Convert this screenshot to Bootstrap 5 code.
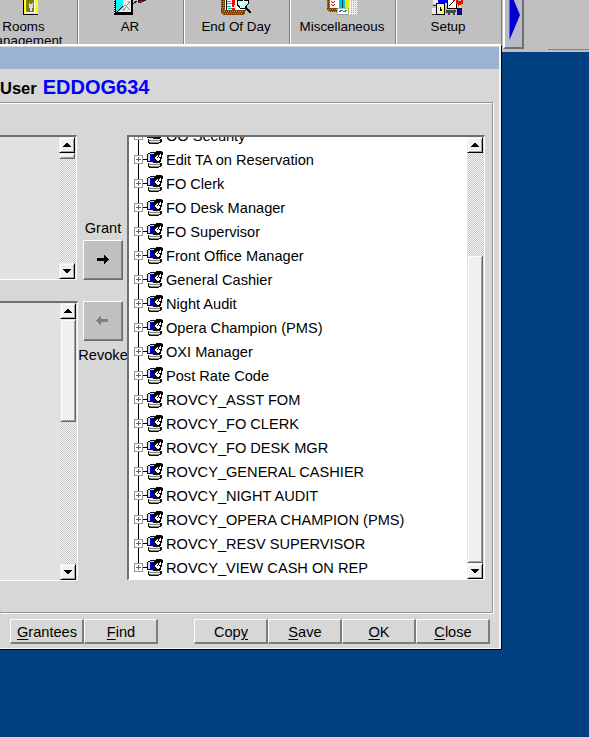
<!DOCTYPE html>
<html lang="en">
<head>
<meta charset="utf-8">
<meta name="viewport" content="width=device-width, initial-scale=1">
<title>User grants</title>
<link href="https://cdn.jsdelivr.net/npm/bootstrap@5.3.0/dist/css/bootstrap.min.css" rel="stylesheet">
<style>
body{background:#004080;font-family:"Liberation Sans",Arial,sans-serif;font-size:14.6px;line-height:18px;color:#000;height:737px;overflow:hidden}
svg{display:block;shape-rendering:crispEdges;flex:none}
.toolbar{height:52px;background:#c0c0c0;overflow:hidden}
.tool{width:106px;flex:none;border-left:1px solid #fff;border-right:1px solid #808080;font-size:13.4px;line-height:16px;height:52px;padding-right:2px}
.tool:first-child{margin-left:-28px;padding-right:3px}
.tool svg{height:15px;width:34px;margin-bottom:5px}
.tool:first-child svg{margin-left:8px}
.tool span{display:block;line-height:14px}
.next{width:21px;height:49px;background:#b9bcc8;border:solid;border-color:#b9bcc8 #707070 #707070 #fff;border-width:0 2px 2px 2px;margin-left:1px}
.next svg{shape-rendering:auto}
.rule{width:41px;height:1px;background:#808080;margin-top:49px}
.dialog{width:502px;height:606px;margin-top:-8px;background:#d7d7d7;border-top:2px solid #fff;border-right:1px solid #000;border-bottom:1px solid #000;box-shadow:inset -2px -1px 0 #f4f4f4}
.titlebar{height:22px;background:#99b3d1;margin:1px 2px 0 0}
.heading{height:33px;line-height:37px;font-weight:bold;font-size:16.5px}
.heading b{color:#00f;font-size:20px;margin-left:6px}
.panel{height:511px;width:493px;border:solid #949494;border-width:1px 1px 1px 0;box-shadow:1px 1px 0 #fff,inset 0 1px 0 #fff;padding-top:32px}
.sunken{border:solid;border-color:#707070 #fff #fff #707070;border-width:2px 1px 1px 0}
.list-a{width:77px;height:145px;background:#e1e1e1}
.list-b{width:78px;height:280px;background:#e1e1e1;margin-top:21px}
.tree{width:358px;height:445px;background:#fff;border-left-width:2px}
.sbar{width:17px;flex:none;background:repeating-conic-gradient(#c6c6c6 0 25%,#f8f8f8 0 50%) 0 0/2px 2px}
.sbtn,.thumb{background:#f0f0f0;border:1px solid;border-color:#f0f0f0 #000 #000 #f0f0f0;box-shadow:inset 1px 1px 0 #fff,inset -1px -1px 0 #a0a0a0;flex:none;width:16px}
.sbtn{height:16px}
.thumb{border-color:#e3e3e3 #696969 #696969 #e3e3e3}
.t1{height:6px}.t2{height:103px}.t3{height:308px;margin-top:102px}
.mid{width:49px;padding:84px 0 0 1px;flex:none}
.abtn{width:40px;height:40px;background:#c0c0c0;border:1px solid;border-color:#fff #6c6c6c #6c6c6c #fff;box-shadow:inset -1px -1px 0 #808080;padding:1px}
.abtn:first-of-type{margin:3px 0 21px}
.revoke{margin-top:5px;white-space:nowrap}
.leaf{height:24px;padding-left:1px;flex:none;white-space:nowrap}
.leaf svg{width:34px;height:24px;margin-right:2px}
.items{margin-top:-13px}
.view{overflow:hidden;height:442px}
.actions{padding:6px 0 0 10px}
.cmd{width:74px;height:25px;background:#d7d7d7;border:solid;border-width:1px 2px 2px 1px;border-color:#fff #7c7c7c #7c7c7c #fff;line-height:25px;text-align:center;padding:0 0 0 1px;color:#000;flex:none}
u{text-underline-offset:2px;text-decoration-thickness:1px}
.gap-cmd{margin-left:36px}
</style>
</head>
<body>
<svg width="0" height="0" class="position-absolute">
<defs>
<path id="up" d="M7 6h2v1h1v1h1v1h1v1H4V9h1V8h1V7h1z"/>
<g id="node">
<path d="M8 0h1v7h-1zM13 11h4v1h-4z"/>
<path d="M4.500 7.500h8v8h-8z" fill="#fff" stroke="#969696"/><path d="M6 11.500h5M8.500 9v5" stroke="#606060"/>
<path d="M20 4h8v1h-8zM18 5h2v1h-2zM17 6h1v8h-1zM18 13h12v2h2v3h-1v1h-2v1H19v-1h-1v-4h1v-1h-1z" fill="#111"/>
<path d="M20 5h6v2h-6zM18 6h2v7h-2z" fill="#dcdcdc"/>
<path d="M20 6h6v7h-6z" fill="#0000b8"/>
<path d="M25 4h1V3h6v1h1v3h-1v4h-1v3h-4v-1h-2v-2h-1V9h-1V6h1V5h1z"/>
<path d="M25 9h1V8h1V7h1v2h1V7h1V6h1v3h-1v3h-1v1h-2v-1h-1v-1h-1z" fill="#fff"/>
<path d="M27 9h1v1h-1zM29 9h1v1h-1z"/>
<path d="M23 12h3v1h2v1h-5z" fill="#0000b8"/>
<path d="M19 14h4v1h7v1H19zM19 17h11v1H19z" fill="#e8e8e8"/><path d="M19 16h11v1H19zM20 18h9v1h-9z" fill="#8c8c8c"/>
</g>
<g id="branch"><use href="#node"/><path d="M8 16h1v8h-1z"/></g>
</defs></svg>
<header class="toolbar d-flex">
 <div class="tool d-flex flex-column align-items-center text-center">
  <svg viewBox="-1 0 34 15"><path d="M12 0h14v14H12z" fill="#ff0"/><path d="M11 0h1v14h14v1H11z"/><path d="M13 0h10v13H13z" fill="#fff"/><path d="M14 0h8v12h-8z" fill="#808000"/><path d="M17 3h1v1h2V3h1v5h-1v3h-1V8v3h-1V8h-1z" fill="#ddd"/></svg>
  <span>Rooms</span><span>Management</span></div>
 <div class="tool d-flex flex-column align-items-center">
  <svg viewBox="0 0 34 15"><path d="M1 0h19v15H1z"/><path d="M3 0h7v6l-7 6z" fill="#0ff"/><path d="M10 0h8v12H4l6-6z" fill="#e8e8e8"/><path d="M6 11l6-6 5 5M10 11l7-10" stroke="#999" fill="none"/><path d="M1.500 0v13" stroke="#fff" stroke-dasharray="1 1"/><path d="M20 4l4-3" stroke="#000"/><path d="M25 0h8l-2 1h-2v1l-3 1-1-1z" fill="red" stroke="#000" stroke-width=".6"/></svg>
  <span>AR</span></div>
 <div class="tool d-flex flex-column align-items-center">
  <svg viewBox="0 0 34 15"><path d="M2 0h25v10l-2 5H4l-2-2z" fill="#804000"/><path d="M2 1h4M2 3h4M2 5h4M2 7h4M3 9h4M3 11h22M4 13h20" stroke="#c89000" stroke-dasharray="1 1"/><path d="M6 0h20v10H6z" fill="#fff"/><path d="M7 0h1v10H7z"/><path d="M8 1h4v1H8zM8 3h5v1H8zM8 6h4v1H8zM9 8h4v1H9z" fill="#00b8c8"/><path d="M13 0h3v5h-1v2h-2zM13 8h3v2h-3z" fill="red"/><path d="M18 0h11v4l-3 4h-5l-3-4z" fill="#bff" stroke="#000"/><path d="M21 5l4-4" stroke="#fff" stroke-width="2"/><path d="M27 8l5 5" stroke="#000" stroke-width="2"/></svg>
  <span>End Of Day</span></div>
 <div class="tool d-flex flex-column align-items-center">
  <svg viewBox="0 0 34 15"><path d="M2 0h20v12H4l-2-2z" fill="#804000"/><path d="M2 1h4M2 3h4M2 5h4M2 7h4M3 9h10M4 11h9" stroke="#c89000" stroke-dasharray="1 1"/><path d="M5 0h9v8H5z" fill="#fff"/><path d="M6 1l2 2 2-2M6 4l2 2 2-2" stroke="red" fill="none"/><path d="M14 0h6v9h-6z" fill="#00c8d8"/><path d="M17 0v9" stroke="#046"/><path d="M20 0h4v13h-4z" fill="#e8e800"/><path d="M24 0h8v15h-8z" fill="#eee"/><path d="M26 0v15M28 0v15M30 0v15" stroke="#aaa" stroke-dasharray="1 1"/><path d="M12 8h11v6H12z" fill="#fff" stroke="#777" stroke-width=".5"/><path d="M14 12l3-2 2 2 3-2" stroke="#088" fill="none"/></svg>
  <span>Miscellaneous</span></div>
 <div class="tool d-flex flex-column align-items-center">
  <svg viewBox="0 0 34 15"><path d="M2 0h14v4H2zM1 8h5v6H1z" fill="#eee"/><path d="M7 0h9v3H7z" fill="#00f"/><path d="M2 5h4v1H2zM1 14h6v1H1z" fill="#333"/><path d="M5.500 3.500h8v11h-8z" fill="#eee" stroke="#000"/><path d="M8 6h4v7H8z" fill="#ffff60"/><path d="M9 7h1v2h1v2h-2z"/><path d="M16.500-1h9v9h-9z" fill="#fff" stroke="#000"/><path d="M18 6l5-5" stroke="#000"/><path d="M22 1l2-1" stroke="#c00"/><path d="M15 10h10v2h-1v3h-2v-2h-3v2h-2v-2h-2z" fill="#444"/><path d="M25 0h2v1h3V0h2v4h-2v2h-3V4h-2z" fill="red"/><path d="M26 8h5v7h-5z" fill="#000080"/><path d="M28 5h2v3h-2z" fill="#ff0"/></svg>
  <span>Setup</span></div>
 <div class="next"><svg width="17" height="47"><path d="M4.500-10v50L15 15z" fill="#0000d0"/></svg></div>
 <div class="rule ms-auto"></div>
</header>
<main class="dialog position-relative">
 <div class="titlebar"></div>
 <div class="heading">User<b>EDDOG634</b></div>
 <section class="panel d-flex">
  <div class="flex-shrink-0">
   <div class="sunken list-a d-flex justify-content-end"><div class="sbar d-flex flex-column"><div class="sbtn"><svg width="14" height="14" viewBox="1 1 14 14"><use href="#up"/></svg></div><div class="thumb t1"></div><div class="sbtn mt-auto"><svg width="14" height="14" viewBox="1 1 14 14"><use href="#up" transform="matrix(1 0 0 -1 0 16)"/></svg></div></div></div>
   <div class="sunken list-b d-flex justify-content-end"><div class="sbar d-flex flex-column"><div class="sbtn"><svg width="14" height="14" viewBox="1 1 14 14"><use href="#up"/></svg></div><div class="thumb t2"></div><div class="sbtn mt-auto"><svg width="14" height="14" viewBox="1 1 14 14"><use href="#up" transform="matrix(1 0 0 -1 0 16)"/></svg></div></div></div>
  </div>
  <div class="mid d-flex flex-column align-items-center">
   <span>Grant</span>
   <button class="abtn"><svg width="36" height="36"><path d="M12 16h7v-3h1v1h1v1h1v1h1v1h1v1h-1v1h-1v1h-1v1h-1v1h-1v-3h-7z"/></svg></button>
   <button class="abtn"><svg width="36" height="36"><path d="M23 16h-7v-3h-1v1h-1v1h-1v1h-1v1h-1v1h1v1h1v1h1v1h1v1h1v-3h7z" fill="#808080"/></svg></button>
   <span class="revoke">Revoke</span>
  </div>
  <div class="sunken tree d-flex position-relative">
   <div class="view flex-grow-1"><div class="items">
    <div class="leaf d-flex align-items-center"><svg><use href="#branch"/></svg>OO Security</div>
    <div class="leaf d-flex align-items-center"><svg><use href="#branch"/></svg>Edit TA on Reservation</div>
    <div class="leaf d-flex align-items-center"><svg><use href="#branch"/></svg>FO Clerk</div>
    <div class="leaf d-flex align-items-center"><svg><use href="#branch"/></svg>FO Desk Manager</div>
    <div class="leaf d-flex align-items-center"><svg><use href="#branch"/></svg>FO Supervisor</div>
    <div class="leaf d-flex align-items-center"><svg><use href="#branch"/></svg>Front Office Manager</div>
    <div class="leaf d-flex align-items-center"><svg><use href="#branch"/></svg>General Cashier</div>
    <div class="leaf d-flex align-items-center"><svg><use href="#branch"/></svg>Night Audit</div>
    <div class="leaf d-flex align-items-center"><svg><use href="#branch"/></svg>Opera Champion (PMS)</div>
    <div class="leaf d-flex align-items-center"><svg><use href="#branch"/></svg>OXI Manager</div>
    <div class="leaf d-flex align-items-center"><svg><use href="#branch"/></svg>Post Rate Code</div>
    <div class="leaf d-flex align-items-center"><svg><use href="#branch"/></svg>ROVCY_ASST FOM</div>
    <div class="leaf d-flex align-items-center"><svg><use href="#branch"/></svg>ROVCY_FO CLERK</div>
    <div class="leaf d-flex align-items-center"><svg><use href="#branch"/></svg>ROVCY_FO DESK MGR</div>
    <div class="leaf d-flex align-items-center"><svg><use href="#branch"/></svg>ROVCY_GENERAL CASHIER</div>
    <div class="leaf d-flex align-items-center"><svg><use href="#branch"/></svg>ROVCY_NIGHT AUDIT</div>
    <div class="leaf d-flex align-items-center"><svg><use href="#branch"/></svg>ROVCY_OPERA CHAMPION (PMS)</div>
    <div class="leaf d-flex align-items-center"><svg><use href="#branch"/></svg>ROVCY_RESV SUPERVISOR</div>
    <div class="leaf d-flex align-items-center"><svg><use href="#node"/></svg>ROVCY_VIEW CASH ON REP</div>
   </div></div>
   <div class="sbar d-flex flex-column"><div class="sbtn"><svg width="14" height="14" viewBox="1 1 14 14"><use href="#up"/></svg></div><div class="thumb t3"></div><div class="sbtn mt-auto"><svg width="14" height="14" viewBox="1 1 14 14"><use href="#up" transform="matrix(1 0 0 -1 0 16)"/></svg></div></div>
  </div>
 </section>
 <footer class="actions d-flex">
  <button class="cmd"><u>G</u>rantees</button><button class="cmd"><u>F</u>ind</button>
  <button class="cmd gap-cmd">Cop<u>y</u></button><button class="cmd"><u>S</u>ave</button><button class="cmd"><u>O</u>K</button><button class="cmd"><u>C</u>lose</button>
 </footer>
</main>
<script src="https://cdn.jsdelivr.net/npm/bootstrap@5.3.0/dist/js/bootstrap.bundle.min.js"></script>
</body>
</html>
